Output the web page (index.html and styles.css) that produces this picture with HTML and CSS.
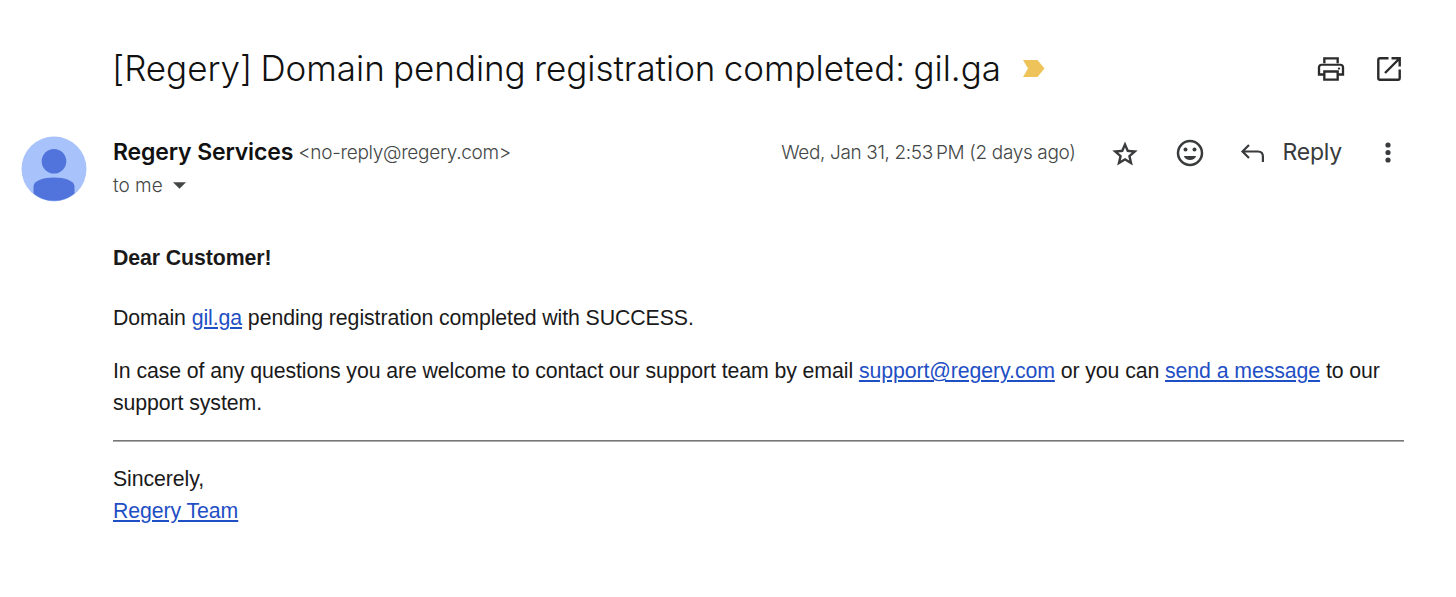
FILE: index.html
```html
<!DOCTYPE html>
<html lang="en">
<head>
    <meta charset="UTF-8">
    <meta name="viewport" content="width=device-width, initial-scale=1.0">
    <title>[Regery] Domain pending registration completed: gil.ga</title>
    <link rel="stylesheet" href="styles.css">
</head>
<body>
    <header class="subject-bar">
        <h1>[Regery] Domain pending registration completed: gil.ga</h1>
        <svg class="marker" width="22" height="17" viewBox="0 0 22 17"><path fill="#eec45a" d="M0 0h14.500L21.500 8.500 14.500 17H0l5-8.500z"/></svg>
        <div class="subject-actions">
            <svg width="32" height="32" viewBox="0 -960 960 960"><path fill="#2b2b2b" d="M645-650v-115H315v115h-70v-185h470v185h-70Zm75 190q14 0 24-10t10-24q0-14-10-24t-24-10q-14 0-24 10t-10 24q0 14 10 24t24 10Zm-75 265v-175H315v175h330Zm70 70H245v-155H85v-250q0-45 31-77t77-33h574q46 0 77 33t31 77v250H715v155Zm90-225v-180q0-19-12-32t-31-13H198q-19 0-31 13t-12 32v180h90v-90h470v90h90Z"/></svg>
            <svg width="32" height="32" viewBox="0 0 32 32"><g fill="none" stroke="#2b2b2b" stroke-width="2.400"><path d="M15.500 5.300H7Q5.300 5.300 5.300 7v18q0 1.700 1.700 1.700h18q1.700 0 1.700-1.700v-8.500"/><path d="M18.500 5.300h8.200v8.200M26.500 5.500L12 20"/></g></svg>
        </div>
    </header>

    <div class="message">
        <svg class="avatar" width="66" height="66" viewBox="0 0 66 66">
            <circle cx="33" cy="33" r="32.500" fill="#a8c2fb"/>
            <circle cx="33" cy="25.200" r="12.300" fill="#5074dc"/>
            <path fill="#5074dc" d="M12.500 57.500V50C13.500 44.500 22 41.500 33 41.500S52.500 44.500 53.500 50v7.500A32.500 32.500 0 0 1 12.500 57.500z"/>
        </svg>
        <div class="content">
            <div class="sender-row">
                <span class="name">Regery Services</span>
                <span class="email">&lt;no-reply@regery.com&gt;</span>
                <span class="date">Wed, Jan 31, 2:53&#8239;PM (2 days ago)</span>
                <svg class="star" width="32" height="32" viewBox="0 -960 960 960"><path fill="#393b3d" d="m354-287 126-76 126 77-33-144 111-96-146-13-58-136-58 135-146 13 111 97-33 143ZM245-135l62-267L99-582l274-24 107-252 107 252 274 24-208 180 62 267-235-142-235 142Z"/></svg>
                <svg class="smile" width="32" height="32" viewBox="0 0 32 32">
                    <circle cx="16" cy="16" r="12" fill="none" stroke="#393b3d" stroke-width="2.500"/>
                    <circle cx="11.500" cy="12.600" r="2" fill="#393b3d"/>
                    <circle cx="20.500" cy="12.600" r="2" fill="#393b3d"/>
                    <path fill="#393b3d" d="M9.800 19h12.400c-1 2.600-3.300 4-6.200 4s-5.200-1.400-6.200-4z"/>
                </svg>
                <svg class="arrow" width="32" height="32" viewBox="0 0 32 32"><path fill="none" stroke="#393b3d" stroke-width="2.200" d="M12 8L5.500 14.500l6.500 6.500M5.500 14.500h15.500q4.900 0 4.900 5V25"/></svg>
                <span class="reply">Reply</span>
                <svg class="more" width="8" height="22" viewBox="0 0 8 22"><g fill="#393b3d"><circle cx="4" cy="3" r="2.600"/><circle cx="4" cy="10.500" r="2.600"/><circle cx="4" cy="18" r="2.600"/></g></svg>
            </div>
            <div class="recipient">
                <span>to me</span>
                <svg width="13" height="7" viewBox="0 0 14 7"><path fill="#444746" d="M0 0h14L7 7z"/></svg>
            </div>

            <div class="mail-body">
                <p class="greeting"><b>Dear Customer!</b></p>
                <p>Domain <a href="#">gil.ga</a> pending registration completed with SUCCESS.</p>
                <p>In case of any questions you are welcome to contact our support team by email <a href="#">support@regery.com</a> or you can <a href="#">send a message</a> to our support system.</p>
                <hr>
                <p>Sincerely,<br><a href="#">Regery Team</a></p>
            </div>
        </div>
    </div>
</body>
</html>
```

FILE: styles.css
```css
body {
    font-family: "Liberation Sans", Arial, sans-serif;
    margin: 0;
    background-color: #fff;
    color: #1a1a1a;
}
svg {
    display: block;
    flex: none;
}
.subject-bar {
    display: flex;
    align-items: center;
    height: 48px;
    padding: 45px 51px 0 112px;
}
h1 {
    margin: 0;
    padding-bottom: 2px;
    font-family: Inter, sans-serif;
    font-size: 35px;
    font-weight: 350;
    line-height: 46px;
    letter-spacing: -0.03px;
    word-spacing: -1.5px;
    white-space: nowrap;
    color: #111;
}
.marker {
    margin: 0 0 2px 22px;
}
.subject-actions {
    display: flex;
    gap: 26px;
    margin-left: auto;
}
.message {
    display: flex;
    padding: 43px 52px 0 21px;
}
.avatar {
    margin-right: 26px;
}
.content {
    flex: 1;
}
.sender-row {
    display: flex;
    align-items: center;
    height: 34px;
    white-space: nowrap;
    font-family: Inter, sans-serif;
}
.sender-row span,
.recipient span {
    padding-bottom: 2px;
}
.name {
    font-size: 23px;
    font-weight: 600;
    letter-spacing: -0.14px;
    color: #111;
}
.email {
    margin-left: 5px;
    font-size: 19px;
    font-weight: 300;
    letter-spacing: -0.3px;
    color: #444746;
}
.date {
    margin-left: auto;
    font-size: 19px;
    font-weight: 300;
    letter-spacing: -0.36px;
    color: #444746;
}
.star {
    margin: 2px 0 0 34px;
}
.smile {
    margin-left: 33px;
}
.arrow {
    margin-left: 31px;
}
.reply {
    margin-left: 13px;
    font-size: 23px;
    letter-spacing: -0.2px;
    color: #393b3d;
}
.more {
    margin: 0 12px 0 42px;
}
.recipient {
    display: flex;
    align-items: center;
    gap: 10px;
    height: 30px;
    font-family: Inter, sans-serif;
    font-size: 19px;
    font-weight: 300;
    color: #444746;
}
.recipient span {
    padding-bottom: 0;
}
.mail-body {
    padding-top: 42px;
    font-size: 21.3px;
    letter-spacing: -0.09px;
    line-height: 32px;
}
.mail-body p {
    margin: 0 0 21px;
}
.mail-body .greeting {
    margin-bottom: 28px;
}
.mail-body hr {
    margin: 0 0 21px;
    border: 0;
    border-top: 1px solid #777;
    border-bottom: 1px solid #aaa;
}
a {
    color: #1f4fc4;
    text-decoration: underline;
}
```
